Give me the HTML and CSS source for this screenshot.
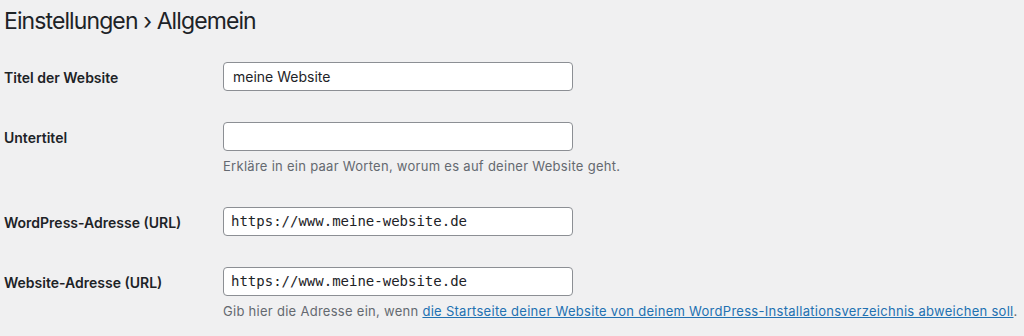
FILE: index.html
```html
<!DOCTYPE html>
<html lang="de">
<head>
<meta charset="utf-8">
<title>Einstellungen › Allgemein</title>
<link rel="stylesheet" href="styles.css">
</head>
<body>
<div class="wrap">
  <h1 class="title">Einstellungen › Allgemein</h1>
  <div class="form">
    <div class="row">
      <label class="label">Titel der Website</label>
      <div class="field"><div class="input">meine Website</div></div>
    </div>
    <div class="row">
      <label class="label">Untertitel</label>
      <div class="field">
        <div class="input"></div>
        <p class="description">Erkläre in ein paar Worten, worum es auf deiner Website geht.</p>
      </div>
    </div>
    <div class="row">
      <label class="label">WordPress-Adresse (URL)</label>
      <div class="field"><div class="input code">https://www.meine-website.de</div></div>
    </div>
    <div class="row">
      <label class="label">Website-Adresse (URL)</label>
      <div class="field">
        <div class="input code">https://www.meine-website.de</div>
        <p class="description">Gib hier die Adresse ein, wenn <a href="#">die Startseite deiner Website von deinem WordPress-Installationsverzeichnis abweichen soll</a>.</p>
      </div>
    </div>
  </div>
</div>
</body>
</html>
```
FILE: styles.css
```css
html, body {
  margin: 0;
  padding: 0;
  background: #f0f0f1;
  color: #1d2327;
  font-family: Inter, "Liberation Sans", sans-serif;
  font-size: 13px;
}
.wrap {
  padding: 0 0 0 4px;
}
.title {
  margin: 0;
  padding-top: 7px;
  height: 47px;
  box-sizing: border-box;
  font-size: 23px;
  font-weight: 400;
  line-height: 29px;
  letter-spacing: -0.9px;
}
.form {
  display: flex;
  flex-direction: column;
}
.row {
  display: grid;
  grid-template-columns: 219px 350px;
  padding: 15px 0;
}
.label {
  height: 30px;
  display: flex;
  align-items: center;
  font-size: 14px;
  font-weight: 600;
}
.field {
  display: flex;
  flex-direction: column;
}
.input {
  box-sizing: border-box;
  width: 350px;
  height: 29px;
  border: 1px solid #8c8f94;
  border-radius: 4px;
  background: #fff;
  padding: 0 9px;
  font-size: 14px;
  line-height: 27px;
  white-space: nowrap;
}
.code {
  font-family: "DejaVu Sans Mono", monospace;
  font-size: 14px;
  padding: 0 7px;
}
.description {
  margin: 5px 0 1px;
  line-height: 20px;
  color: #646970;
  letter-spacing: 0.28px;
  white-space: nowrap;
}
.description a {
  color: #2271b1;
  text-decoration: underline;
}
```
